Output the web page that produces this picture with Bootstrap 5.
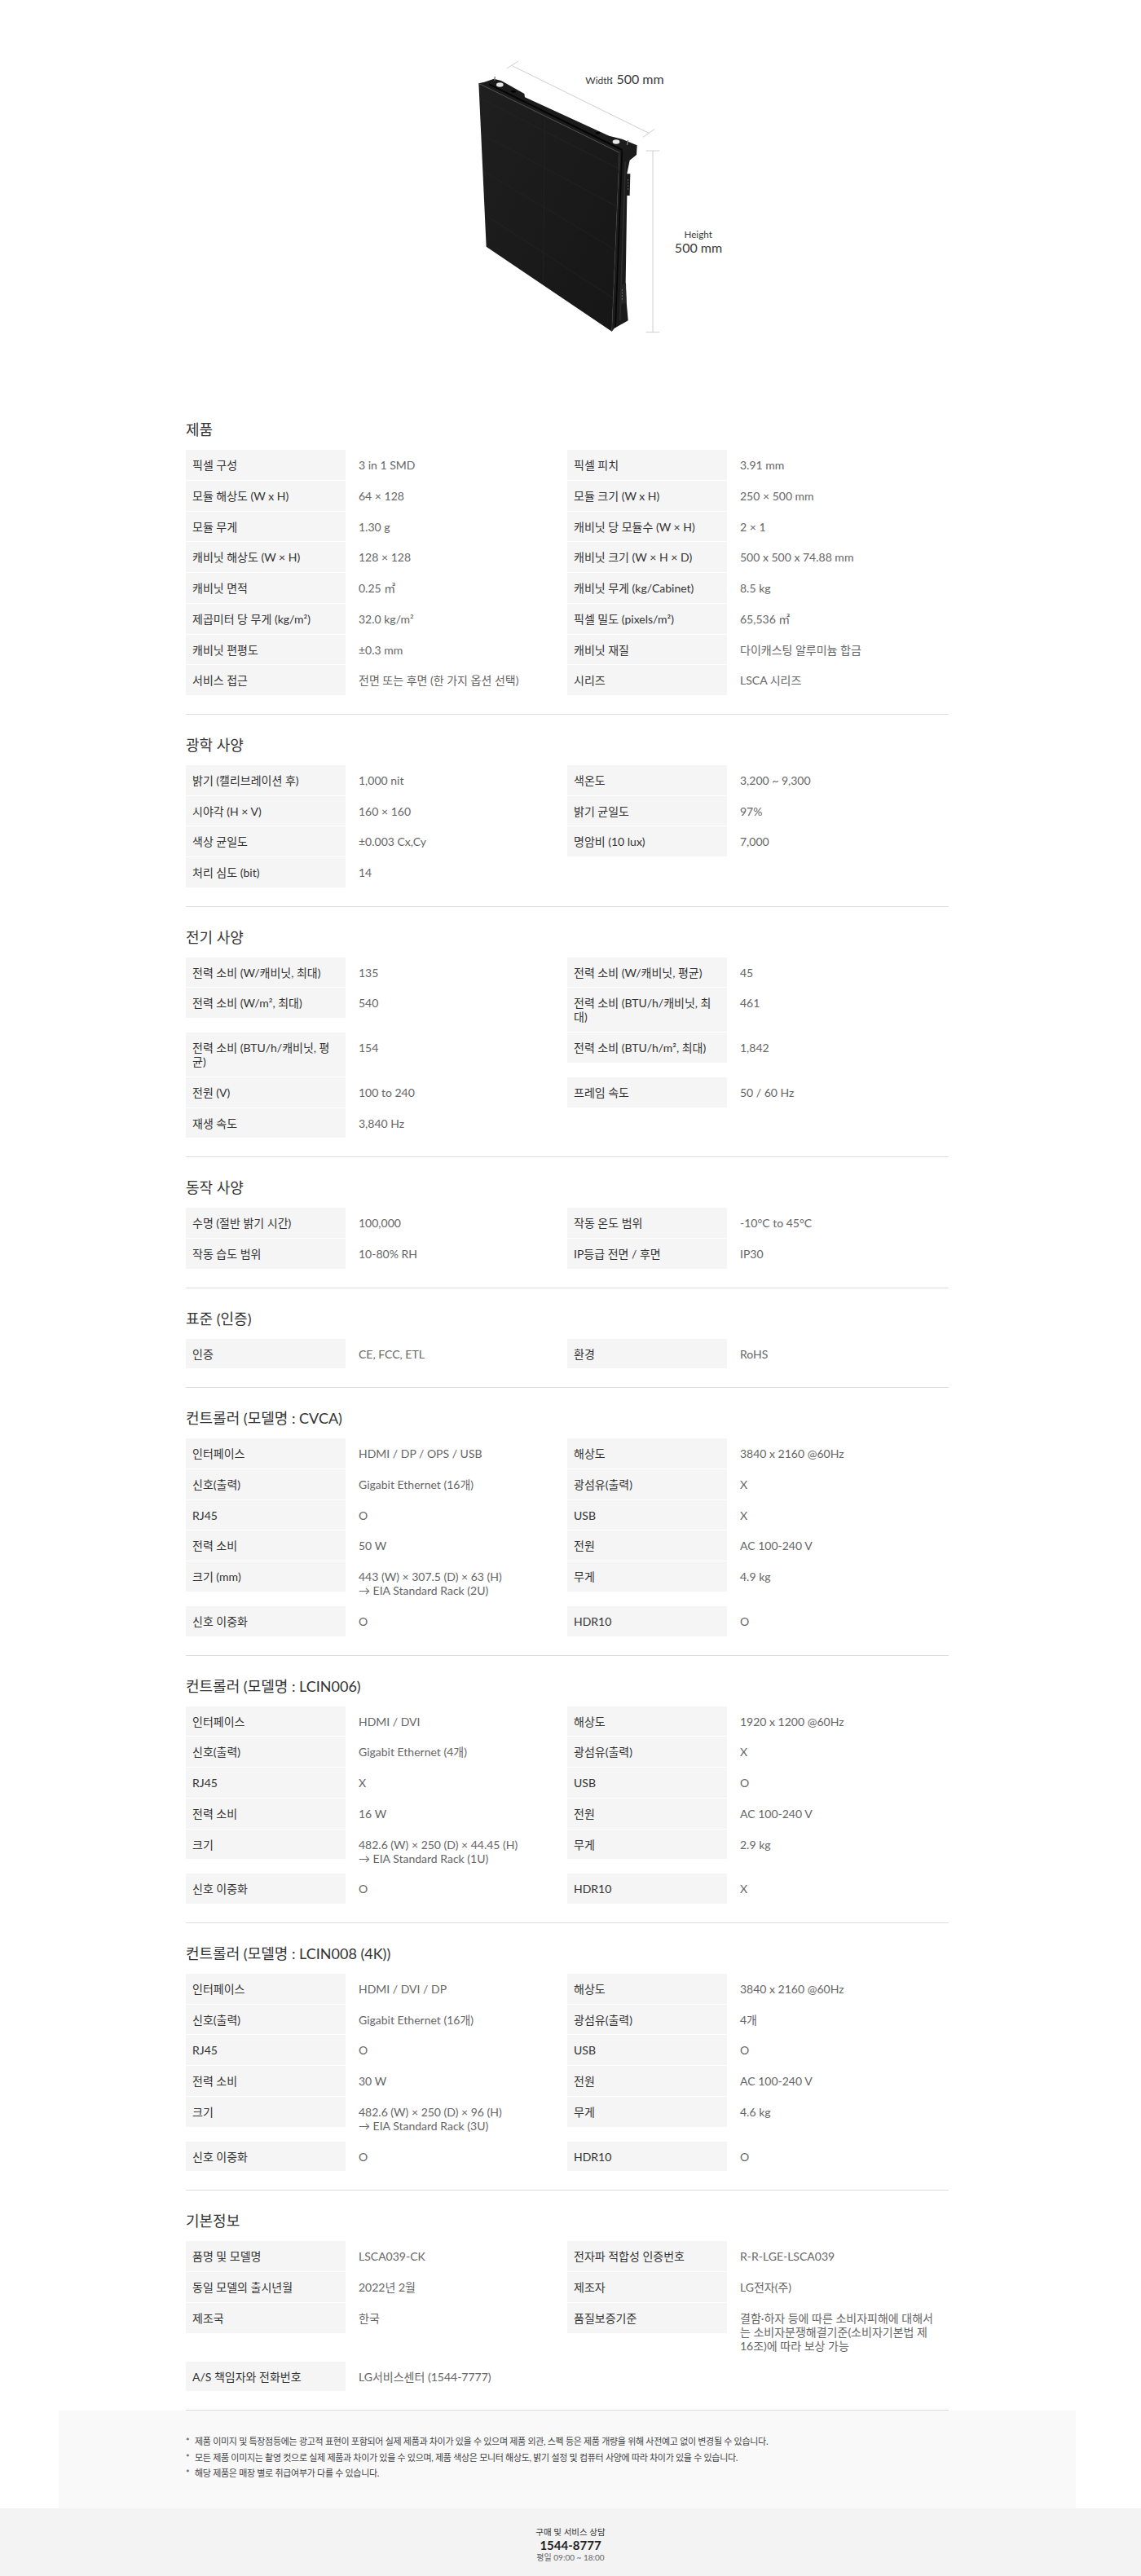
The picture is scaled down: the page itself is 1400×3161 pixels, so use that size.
<!DOCTYPE html>
<html lang="ko">
<head>
<meta charset="utf-8">
<title>LSCA039 사양</title>
<link href="https://cdn.jsdelivr.net/npm/bootstrap@5.3.0/dist/css/bootstrap.min.css" rel="stylesheet">
<style>
body{font-family:"Lato","Noto Sans CJK KR","Noto Sans",sans-serif;background:#fff;color:#333;font-size:14px;line-height:17px;width:1400px;overflow-x:hidden}
.hero{padding-top:50px;margin-bottom:84px}
.hero svg{display:block;margin:0 auto}
.hero text{font-family:"Lato","Noto Sans",sans-serif;fill:#3a3a3a}
.spec-wrap{width:936px;margin-left:228px}
.spec-sec{padding-top:24px;padding-bottom:21.85px;border-bottom:1px solid #ddd}
.spec-sec:first-child{padding-top:0}
.spec-title{font-size:18px;line-height:26px;margin:0 0 12px;font-weight:400;color:#333}
.spec-row{margin-bottom:1px}
.spec-label{flex:0 0 196px;width:196px;background:#f5f5f5;padding:10px 8px 9.75px;color:#333}
.spec-val{flex:1 1 0;min-width:0;padding:10px 16px 9.75px;color:#666}
.note-band{margin-left:72px;width:1248px;background:#f9f9fa;height:120px;padding-top:28px}
.note-list{width:936px;margin:0 0 0 156px;list-style:none;padding:0;font-size:11px;letter-spacing:-.3px;line-height:19.5px;color:#444}
.note-list li{padding-left:11px;position:relative}
.note-list li::before{content:"*";position:absolute;left:0}
.contact{background:#f3f3f3;height:83px;text-align:center;padding-top:21px}
.contact-a{font-size:10.5px;line-height:16px;color:#333}
.contact-b{font-size:15px;line-height:16px;font-weight:700;color:#222}
.contact-c{font-size:10px;line-height:15px;color:#666}
</style>
</head>
<body>
<div class="hero">
<svg width="420" height="380" viewBox="-30 0 1260 1140" role="img" aria-label="Width 500 mm, Height 500 mm">
  <defs><linearGradient id="pg" x1="0" y1="0" x2="1" y2="1"><stop offset="0" stop-color="#1f1f1f"/><stop offset="1" stop-color="#161616"/></linearGradient></defs>
  <g stroke="#cfcfcf" stroke-width="3" fill="none">
    <path d="M385 92 888 340M365 102 408 75M867 355 910 325"/>
    <path d="M903 405V1073M878 405H928M878 1073H928"/>
  </g>
  <path d="M283 152 318 140 345 147 430 195 432 208 680 322 742 350 790 362 845 385 843 420 818 440 808 490 820 490 818 570 808 570 803 890 806 960 812 1030 762 1058 752 1070 780 412 262 157Z" fill="#1b1b1b"/>
  <path d="M262 157 780 412 752 1070 290 758Z" fill="url(#pg)"/>
  <path d="M262 157 780 412" stroke="#4a4a4a" stroke-width="3"/>
  <path d="M300 160 790 402" stroke="#050505" stroke-width="6"/>
  <path d="M790 405 765 1055" stroke="#060606" stroke-width="5"/>
  <path d="M780 412 752 1070" stroke="#3a3a3a" stroke-width="2"/>
  <path d="M802 445 782 1030" stroke="#2c2c2c" stroke-width="5"/>
  <path d="M505 290 500 890M272 215 775 470M276 345 770 610M280 480 765 770M285 640 760 950" stroke="#262626" stroke-width="2" fill="none"/>
  <ellipse cx="340" cy="162" rx="13" ry="8" fill="#e6e6e6"/>
  <ellipse cx="768" cy="372" rx="13" ry="8" fill="#e6e6e6"/>
  <path d="M322 132 320 146M812 366 808 384" stroke="#777" stroke-width="4"/>
  <path d="M784 900 804 892 806 965 780 972Z" fill="#262626"/>
  <path d="M812 510V550M790 915V960" stroke="#777" stroke-width="3" stroke-dasharray="5 6"/>
  <ellipse cx="390" cy="187" rx="9" ry="4" fill="#000"/>
  <ellipse cx="700" cy="340" rx="9" ry="4" fill="#000"/>
  <text x="655" y="160" font-size="36">Width</text>
  <text x="745" y="160" font-size="48">: 500 mm</text>
  <text x="1070" y="727" font-size="35" text-anchor="middle">Height</text>
  <text x="1071" y="780" font-size="48" text-anchor="middle">500 mm</text>
</svg>
</div>

<main class="spec-wrap">
<section class="spec-sec">
<h2 class="spec-title">제품</h2>
<div class="row g-0 spec-row"><div class="col-6 d-flex align-items-start"><div class="spec-label">픽셀 구성</div><div class="spec-val">3 in 1 SMD</div></div><div class="col-6 d-flex align-items-start"><div class="spec-label">픽셀 피치</div><div class="spec-val">3.91 mm</div></div></div>
<div class="row g-0 spec-row"><div class="col-6 d-flex align-items-start"><div class="spec-label">모듈 해상도 (W x H)</div><div class="spec-val">64 × 128</div></div><div class="col-6 d-flex align-items-start"><div class="spec-label">모듈 크기 (W x H)</div><div class="spec-val">250 × 500 mm</div></div></div>
<div class="row g-0 spec-row"><div class="col-6 d-flex align-items-start"><div class="spec-label">모듈 무게</div><div class="spec-val">1.30 g</div></div><div class="col-6 d-flex align-items-start"><div class="spec-label">캐비닛 당 모듈수 (W × H)</div><div class="spec-val">2 × 1</div></div></div>
<div class="row g-0 spec-row"><div class="col-6 d-flex align-items-start"><div class="spec-label">캐비닛 해상도 (W × H)</div><div class="spec-val">128 × 128</div></div><div class="col-6 d-flex align-items-start"><div class="spec-label">캐비닛 크기 (W × H × D)</div><div class="spec-val">500 x 500 x 74.88 mm</div></div></div>
<div class="row g-0 spec-row"><div class="col-6 d-flex align-items-start"><div class="spec-label">캐비닛 면적</div><div class="spec-val">0.25 ㎡</div></div><div class="col-6 d-flex align-items-start"><div class="spec-label">캐비닛 무게 (kg/Cabinet)</div><div class="spec-val">8.5 kg</div></div></div>
<div class="row g-0 spec-row"><div class="col-6 d-flex align-items-start"><div class="spec-label">제곱미터 당 무게 (kg/m²)</div><div class="spec-val">32.0 kg/m²</div></div><div class="col-6 d-flex align-items-start"><div class="spec-label">픽셀 밀도 (pixels/m²)</div><div class="spec-val">65,536 ㎡</div></div></div>
<div class="row g-0 spec-row"><div class="col-6 d-flex align-items-start"><div class="spec-label">캐비닛 편평도</div><div class="spec-val">±0.3 mm</div></div><div class="col-6 d-flex align-items-start"><div class="spec-label">캐비닛 재질</div><div class="spec-val">다이캐스팅 알루미늄 합금</div></div></div>
<div class="row g-0 spec-row"><div class="col-6 d-flex align-items-start"><div class="spec-label">서비스 접근</div><div class="spec-val">전면 또는 후면 (한 가지 옵션 선택)</div></div><div class="col-6 d-flex align-items-start"><div class="spec-label">시리즈</div><div class="spec-val">LSCA 시리즈</div></div></div>
</section>
<section class="spec-sec">
<h2 class="spec-title">광학 사양</h2>
<div class="row g-0 spec-row"><div class="col-6 d-flex align-items-start"><div class="spec-label">밝기 (캘리브레이션 후)</div><div class="spec-val">1,000 nit</div></div><div class="col-6 d-flex align-items-start"><div class="spec-label">색온도</div><div class="spec-val">3,200 ~ 9,300</div></div></div>
<div class="row g-0 spec-row"><div class="col-6 d-flex align-items-start"><div class="spec-label">시야각 (H × V)</div><div class="spec-val">160 × 160</div></div><div class="col-6 d-flex align-items-start"><div class="spec-label">밝기 균일도</div><div class="spec-val">97%</div></div></div>
<div class="row g-0 spec-row"><div class="col-6 d-flex align-items-start"><div class="spec-label">색상 균일도</div><div class="spec-val">±0.003 Cx,Cy</div></div><div class="col-6 d-flex align-items-start"><div class="spec-label">명암비 (10 lux)</div><div class="spec-val">7,000</div></div></div>
<div class="row g-0 spec-row"><div class="col-6 d-flex align-items-start"><div class="spec-label">처리 심도 (bit)</div><div class="spec-val">14</div></div></div>
</section>
<section class="spec-sec">
<h2 class="spec-title">전기 사양</h2>
<div class="row g-0 spec-row"><div class="col-6 d-flex align-items-start"><div class="spec-label">전력 소비 (W/캐비닛, 최대)</div><div class="spec-val">135</div></div><div class="col-6 d-flex align-items-start"><div class="spec-label">전력 소비 (W/캐비닛, 평균)</div><div class="spec-val">45</div></div></div>
<div class="row g-0 spec-row"><div class="col-6 d-flex align-items-start"><div class="spec-label">전력 소비 (W/m², 최대)</div><div class="spec-val">540</div></div><div class="col-6 d-flex align-items-start"><div class="spec-label">전력 소비 (BTU/h/캐비닛, 최대)</div><div class="spec-val">461</div></div></div>
<div class="row g-0 spec-row"><div class="col-6 d-flex align-items-start"><div class="spec-label">전력 소비 (BTU/h/캐비닛, 평균)</div><div class="spec-val">154</div></div><div class="col-6 d-flex align-items-start"><div class="spec-label">전력 소비 (BTU/h/m², 최대)</div><div class="spec-val">1,842</div></div></div>
<div class="row g-0 spec-row"><div class="col-6 d-flex align-items-start"><div class="spec-label">전원 (V)</div><div class="spec-val">100 to 240</div></div><div class="col-6 d-flex align-items-start"><div class="spec-label">프레임 속도</div><div class="spec-val">50 / 60 Hz</div></div></div>
<div class="row g-0 spec-row"><div class="col-6 d-flex align-items-start"><div class="spec-label">재생 속도</div><div class="spec-val">3,840 Hz</div></div></div>
</section>
<section class="spec-sec">
<h2 class="spec-title">동작 사양</h2>
<div class="row g-0 spec-row"><div class="col-6 d-flex align-items-start"><div class="spec-label">수명 (절반 밝기 시간)</div><div class="spec-val">100,000</div></div><div class="col-6 d-flex align-items-start"><div class="spec-label">작동 온도 범위</div><div class="spec-val">-10°C to 45°C</div></div></div>
<div class="row g-0 spec-row"><div class="col-6 d-flex align-items-start"><div class="spec-label">작동 습도 범위</div><div class="spec-val">10-80% RH</div></div><div class="col-6 d-flex align-items-start"><div class="spec-label">IP등급 전면 / 후면</div><div class="spec-val">IP30</div></div></div>
</section>
<section class="spec-sec">
<h2 class="spec-title">표준 (인증)</h2>
<div class="row g-0 spec-row"><div class="col-6 d-flex align-items-start"><div class="spec-label">인증</div><div class="spec-val">CE, FCC, ETL</div></div><div class="col-6 d-flex align-items-start"><div class="spec-label">환경</div><div class="spec-val">RoHS</div></div></div>
</section>
<section class="spec-sec">
<h2 class="spec-title">컨트롤러 (모델명 : CVCA)</h2>
<div class="row g-0 spec-row"><div class="col-6 d-flex align-items-start"><div class="spec-label">인터페이스</div><div class="spec-val">HDMI / DP / OPS / USB</div></div><div class="col-6 d-flex align-items-start"><div class="spec-label">해상도</div><div class="spec-val">3840 x 2160 @60Hz</div></div></div>
<div class="row g-0 spec-row"><div class="col-6 d-flex align-items-start"><div class="spec-label">신호(출력)</div><div class="spec-val">Gigabit Ethernet (16개)</div></div><div class="col-6 d-flex align-items-start"><div class="spec-label">광섬유(출력)</div><div class="spec-val">X</div></div></div>
<div class="row g-0 spec-row"><div class="col-6 d-flex align-items-start"><div class="spec-label">RJ45</div><div class="spec-val">O</div></div><div class="col-6 d-flex align-items-start"><div class="spec-label">USB</div><div class="spec-val">X</div></div></div>
<div class="row g-0 spec-row"><div class="col-6 d-flex align-items-start"><div class="spec-label">전력 소비</div><div class="spec-val">50 W</div></div><div class="col-6 d-flex align-items-start"><div class="spec-label">전원</div><div class="spec-val">AC 100-240 V</div></div></div>
<div class="row g-0 spec-row"><div class="col-6 d-flex align-items-start"><div class="spec-label">크기 (mm)</div><div class="spec-val">443 (W) × 307.5 (D) × 63 (H)<br>→ EIA Standard Rack (2U)</div></div><div class="col-6 d-flex align-items-start"><div class="spec-label">무게</div><div class="spec-val">4.9 kg</div></div></div>
<div class="row g-0 spec-row"><div class="col-6 d-flex align-items-start"><div class="spec-label">신호 이중화</div><div class="spec-val">O</div></div><div class="col-6 d-flex align-items-start"><div class="spec-label">HDR10</div><div class="spec-val">O</div></div></div>
</section>
<section class="spec-sec">
<h2 class="spec-title">컨트롤러 (모델명 : LCIN006)</h2>
<div class="row g-0 spec-row"><div class="col-6 d-flex align-items-start"><div class="spec-label">인터페이스</div><div class="spec-val">HDMI / DVI</div></div><div class="col-6 d-flex align-items-start"><div class="spec-label">해상도</div><div class="spec-val">1920 x 1200 @60Hz</div></div></div>
<div class="row g-0 spec-row"><div class="col-6 d-flex align-items-start"><div class="spec-label">신호(출력)</div><div class="spec-val">Gigabit Ethernet (4개)</div></div><div class="col-6 d-flex align-items-start"><div class="spec-label">광섬유(출력)</div><div class="spec-val">X</div></div></div>
<div class="row g-0 spec-row"><div class="col-6 d-flex align-items-start"><div class="spec-label">RJ45</div><div class="spec-val">X</div></div><div class="col-6 d-flex align-items-start"><div class="spec-label">USB</div><div class="spec-val">O</div></div></div>
<div class="row g-0 spec-row"><div class="col-6 d-flex align-items-start"><div class="spec-label">전력 소비</div><div class="spec-val">16 W</div></div><div class="col-6 d-flex align-items-start"><div class="spec-label">전원</div><div class="spec-val">AC 100-240 V</div></div></div>
<div class="row g-0 spec-row"><div class="col-6 d-flex align-items-start"><div class="spec-label">크기</div><div class="spec-val">482.6 (W) × 250 (D) × 44.45 (H)<br>→ EIA Standard Rack (1U)</div></div><div class="col-6 d-flex align-items-start"><div class="spec-label">무게</div><div class="spec-val">2.9 kg</div></div></div>
<div class="row g-0 spec-row"><div class="col-6 d-flex align-items-start"><div class="spec-label">신호 이중화</div><div class="spec-val">O</div></div><div class="col-6 d-flex align-items-start"><div class="spec-label">HDR10</div><div class="spec-val">X</div></div></div>
</section>
<section class="spec-sec">
<h2 class="spec-title">컨트롤러 (모델명 : LCIN008 (4K))</h2>
<div class="row g-0 spec-row"><div class="col-6 d-flex align-items-start"><div class="spec-label">인터페이스</div><div class="spec-val">HDMI / DVI / DP</div></div><div class="col-6 d-flex align-items-start"><div class="spec-label">해상도</div><div class="spec-val">3840 x 2160 @60Hz</div></div></div>
<div class="row g-0 spec-row"><div class="col-6 d-flex align-items-start"><div class="spec-label">신호(출력)</div><div class="spec-val">Gigabit Ethernet (16개)</div></div><div class="col-6 d-flex align-items-start"><div class="spec-label">광섬유(출력)</div><div class="spec-val">4개</div></div></div>
<div class="row g-0 spec-row"><div class="col-6 d-flex align-items-start"><div class="spec-label">RJ45</div><div class="spec-val">O</div></div><div class="col-6 d-flex align-items-start"><div class="spec-label">USB</div><div class="spec-val">O</div></div></div>
<div class="row g-0 spec-row"><div class="col-6 d-flex align-items-start"><div class="spec-label">전력 소비</div><div class="spec-val">30 W</div></div><div class="col-6 d-flex align-items-start"><div class="spec-label">전원</div><div class="spec-val">AC 100-240 V</div></div></div>
<div class="row g-0 spec-row"><div class="col-6 d-flex align-items-start"><div class="spec-label">크기</div><div class="spec-val">482.6 (W) × 250 (D) × 96 (H)<br>→ EIA Standard Rack (3U)</div></div><div class="col-6 d-flex align-items-start"><div class="spec-label">무게</div><div class="spec-val">4.6 kg</div></div></div>
<div class="row g-0 spec-row"><div class="col-6 d-flex align-items-start"><div class="spec-label">신호 이중화</div><div class="spec-val">O</div></div><div class="col-6 d-flex align-items-start"><div class="spec-label">HDR10</div><div class="spec-val">O</div></div></div>
</section>
<section class="spec-sec">
<h2 class="spec-title">기본정보</h2>
<div class="row g-0 spec-row"><div class="col-6 d-flex align-items-start"><div class="spec-label">품명 및 모델명</div><div class="spec-val">LSCA039-CK</div></div><div class="col-6 d-flex align-items-start"><div class="spec-label">전자파 적합성 인증번호</div><div class="spec-val">R-R-LGE-LSCA039</div></div></div>
<div class="row g-0 spec-row"><div class="col-6 d-flex align-items-start"><div class="spec-label">동일 모델의 출시년월</div><div class="spec-val">2022년 2월</div></div><div class="col-6 d-flex align-items-start"><div class="spec-label">제조자</div><div class="spec-val">LG전자(주)</div></div></div>
<div class="row g-0 spec-row"><div class="col-6 d-flex align-items-start"><div class="spec-label">제조국</div><div class="spec-val">한국</div></div><div class="col-6 d-flex align-items-start"><div class="spec-label">품질보증기준</div><div class="spec-val">결함·하자 등에 따른 소비자피해에 대해서는 소비자분쟁해결기준(소비자기본법 제16조)에 따라 보상 가능</div></div></div>
<div class="row g-0 spec-row"><div class="col-6 d-flex align-items-start"><div class="spec-label">A/S 책임자와 전화번호</div><div class="spec-val">LG서비스센터 (1544-7777)</div></div></div>
</section>
</main>

<div class="note-band">
<ul class="note-list">
<li>제품 이미지 및 특장점등에는 광고적 표현이 포함되어 실제 제품과 차이가 있을 수 있으며 제품 외관, 스펙 등은 제품 개량을 위해 사전예고 없이 변경될 수 있습니다.</li>
<li>모든 제품 이미지는 촬영 컷으로 실제 제품과 차이가 있을 수 있으며, 제품 색상은 모니터 해상도, 밝기 설정 및 컴퓨터 사양에 따라 차이가 있을 수 있습니다.</li>
<li>해당 제품은 매장 별로 취급여부가 다를 수 있습니다.</li>
</ul>
</div>
<footer class="contact">
<div class="contact-a">구매 및 서비스 상담</div>
<div class="contact-b">1544-8777</div>
<div class="contact-c">평일 09:00 ~ 18:00</div>
</footer>
<script src="https://cdn.jsdelivr.net/npm/bootstrap@5.3.0/dist/js/bootstrap.bundle.min.js"></script>
</body>
</html>
